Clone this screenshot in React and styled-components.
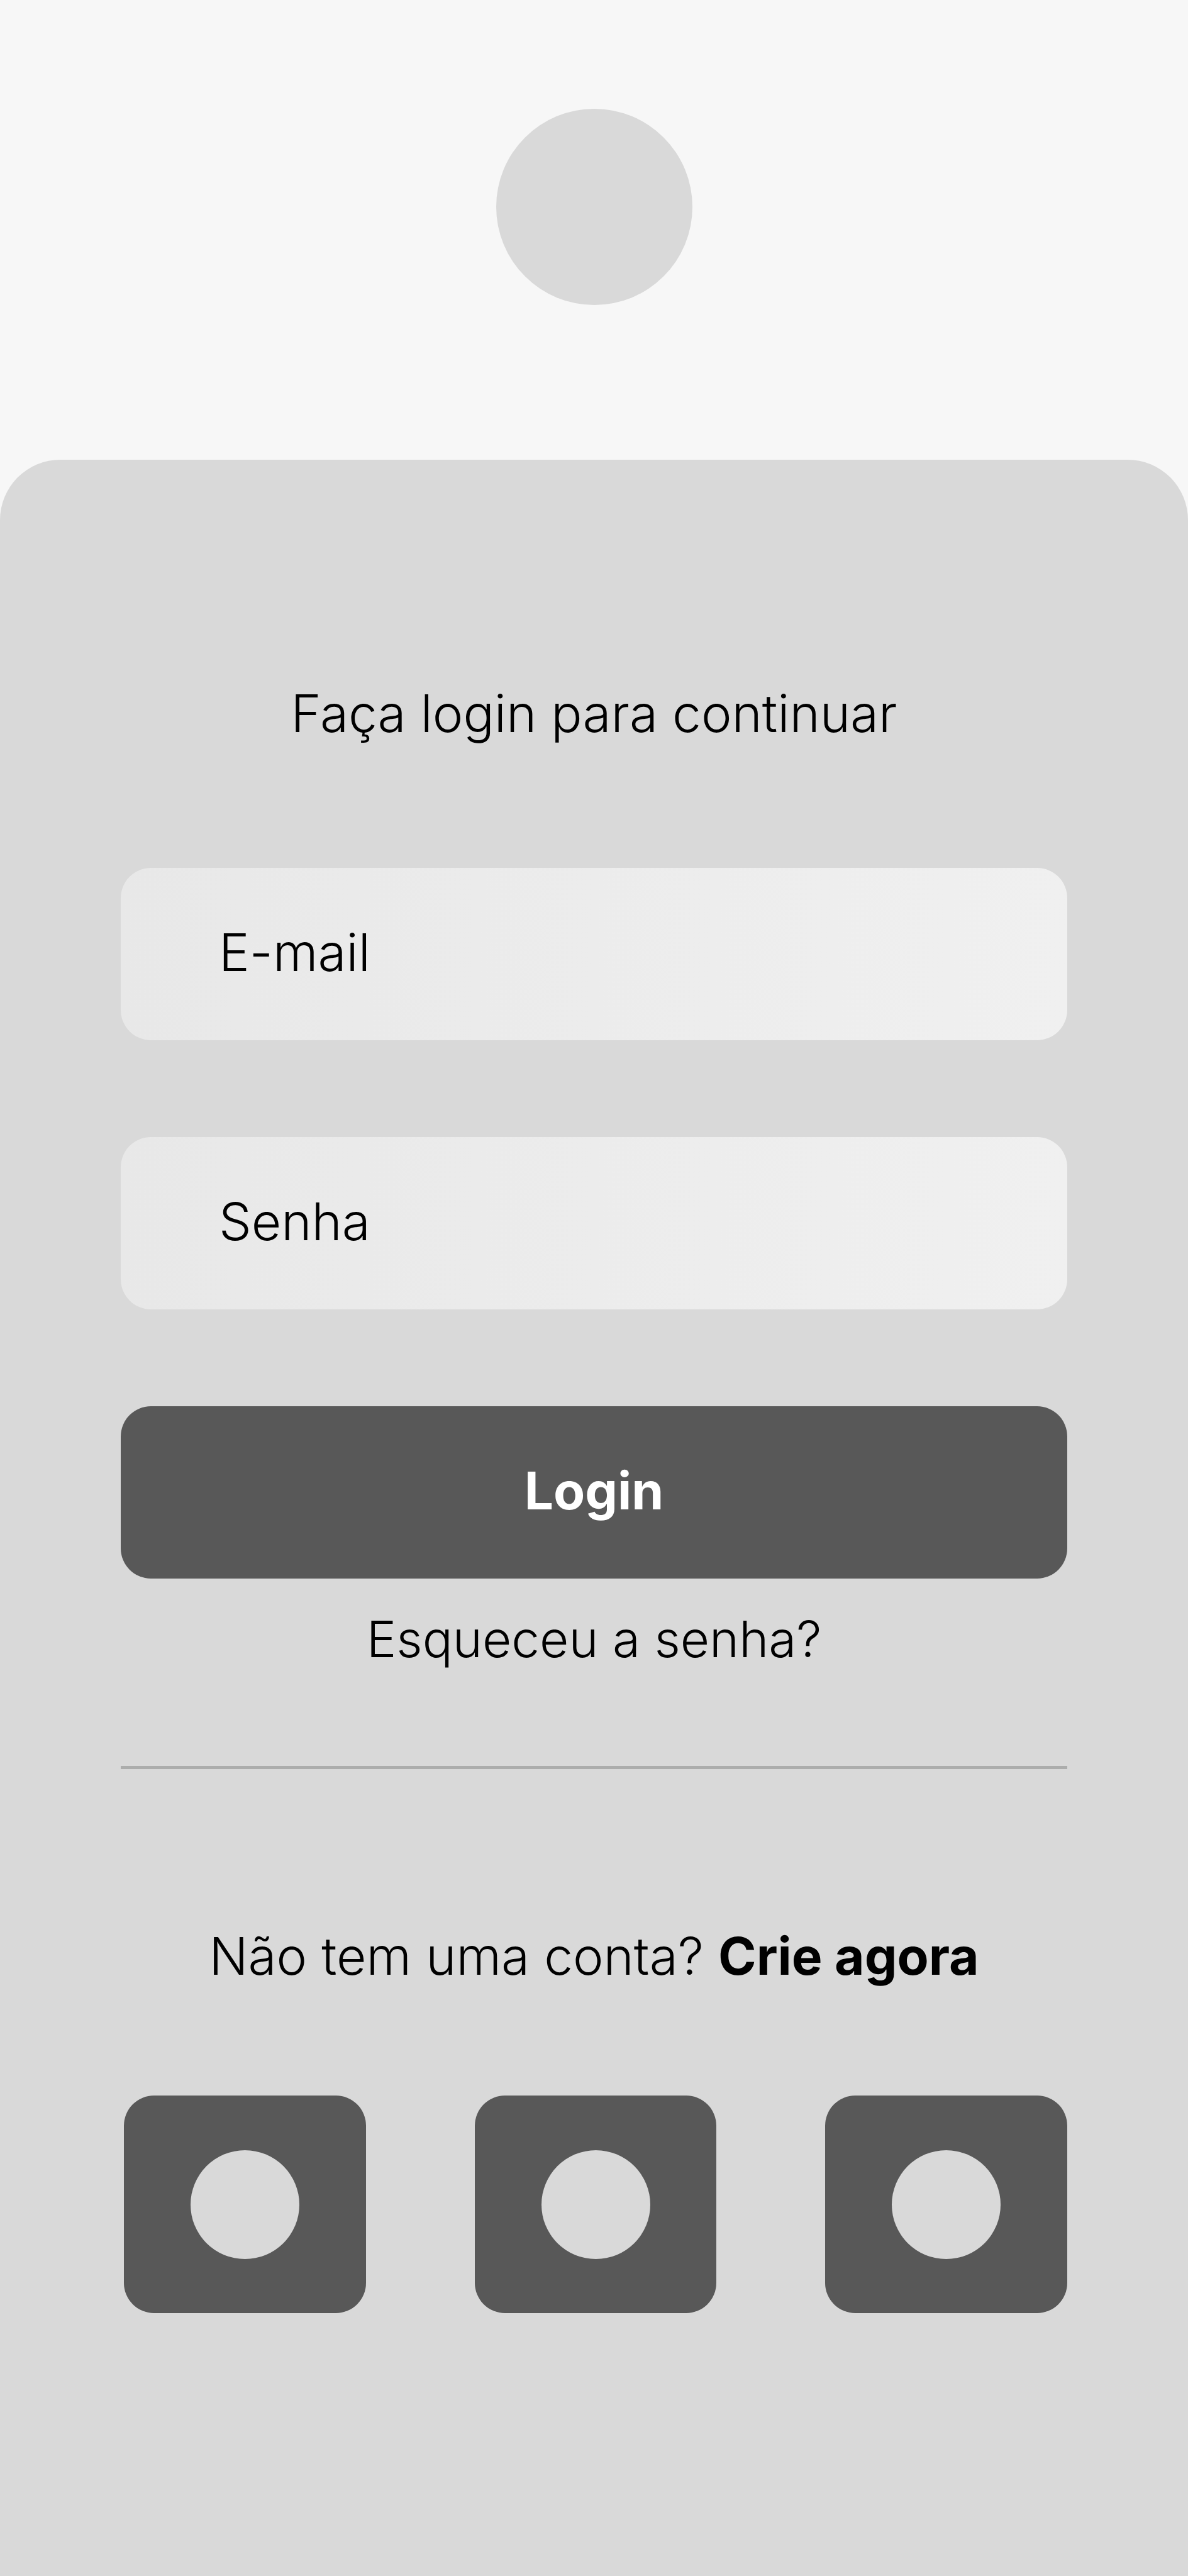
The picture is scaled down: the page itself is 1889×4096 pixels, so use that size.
import React from "react";
import styled, { createGlobalStyle } from "styled-components";

const GlobalStyle = createGlobalStyle`
  *, *::before, *::after { box-sizing: border-box; }
  body {
    margin: 0;
    background: #f7f7f7;
    color: #000;
    font-family: Inter, "Liberation Sans", sans-serif;
    font-size: 82px;
    font-weight: 300;
    line-height: 96px;
  }
`;

const Screen = styled.div`
  display: flex;
  flex-direction: column;
  min-height: 100vh;
`;

const Header = styled.header`
  display: flex;
  justify-content: center;
  padding: 173px 0 246px;
`;

const Dot = styled.span`
  display: block;
  width: ${(p) => p.$size};
  aspect-ratio: 1;
  border-radius: 50%;
  background: #d9d9d9;
`;

const Panel = styled.main`
  flex: 1;
  padding: 356px 192px 192px;
  border-radius: 96px 96px 0 0;
  background: #d9d9d9;
`;

const Title = styled.h1`
  margin: 0 0 197px;
  font: inherit;
  text-align: center;
`;

const Form = styled.form`
  display: flex;
  flex-direction: column;
  gap: 154px;
`;

const Field = styled.div`
  display: flex;
  align-items: center;
  gap: 48px;
  height: 274px;
  padding: 0 156px 4px;
  border-radius: 48px;
  background: linear-gradient(90deg, #e8e8e8, #f0f0f0);
`;

const Input = styled.input`
  flex: 1;
  min-width: 0;
  padding: 0;
  border: 0;
  outline: 0;
  background: transparent;
  color: inherit;
  font: inherit;
`;

const SubmitButton = styled.button`
  height: 274px;
  padding: 0 0 4px;
  border: 0;
  border-radius: 48px;
  background: #585858;
  color: #fff;
  font: inherit;
  font-weight: 700;
  cursor: pointer;
`;

const Line = styled.p`
  margin: ${(p) => p.$margin};
  font-size: ${(p) => p.$size || "82px"};
  text-align: center;
`;

const TextLink = styled.a`
  color: inherit;
  font-weight: ${(p) => (p.$strong ? 700 : 300)};
  text-decoration: none;
`;

const Divider = styled.hr`
  height: 5px;
  margin: 0;
  border: 0;
  background: #acadac;
`;

const SocialRow = styled.div`
  display: flex;
  gap: 173px;
  padding-left: 5px;
`;

const SocialButton = styled.button`
  display: flex;
  flex: 1;
  align-items: center;
  justify-content: center;
  height: 346px;
  padding: 0;
  border: 0;
  border-radius: 48px;
  background: #585858;
  cursor: pointer;
`;

const fields = [
  { id: "email", label: "E-mail", type: "email" },
  { id: "senha", label: "Senha", type: "password" },
];

const socials = ["Rede social 1", "Rede social 2", "Rede social 3"];

export default function App() {
  return (
    <>
      <GlobalStyle />
      <Screen>
        <Header>
          <Dot $size="312px" />
        </Header>
        <Panel>
          <Title>Faça login para continuar</Title>
          <Form onSubmit={(e) => e.preventDefault()}>
            {fields.map((f) => (
              <Field key={f.id}>
                <label htmlFor={f.id}>{f.label}</label>
                <Input id={f.id} name={f.id} type={f.type} />
              </Field>
            ))}
            <SubmitButton type="submit">Login</SubmitButton>
          </Form>
          <Line $margin="48px 0 154px" $size="80px">
            <TextLink href="#senha">Esqueceu a senha?</TextLink>
          </Line>
          <Divider />
          <Line $margin="250px 0 173px">
            Não tem uma conta?{" "}
            <TextLink href="#conta" $strong>
              Crie agora
            </TextLink>
          </Line>
          <SocialRow>
            {socials.map((name) => (
              <SocialButton key={name} type="button" aria-label={name}>
                <Dot $size="173px" />
              </SocialButton>
            ))}
          </SocialRow>
        </Panel>
      </Screen>
    </>
  );
}
